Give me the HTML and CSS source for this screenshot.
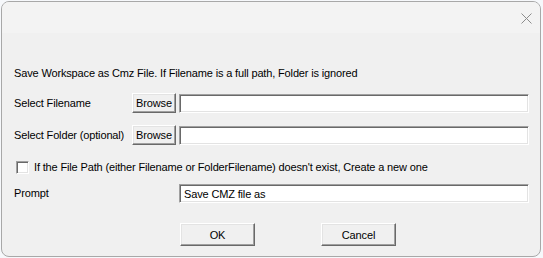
FILE: index.html
```html
<!DOCTYPE html>
<html lang="en">
<head>
  <meta charset="UTF-8">
  <title>Save Workspace</title>
  <link rel="stylesheet" href="styles.css">
</head>
<body>
  <div class="dialog">
    <div class="titlebar">
      <svg class="close" width="11" height="11" viewBox="0 0 11 11">
        <path d="M0.5 0.5 L10.5 10.5 M10.5 0.5 L0.5 10.5" stroke="#8c8c8c" stroke-width="1" fill="none"/>
      </svg>
    </div>
    <div class="content">
      <p class="intro">Save Workspace as Cmz File. If Filename is a full path, Folder is ignored</p>
      <div class="row row-file">
        <span class="label">Select Filename</span>
        <button class="browse" type="button">Browse</button>
        <input class="field" type="text">
      </div>
      <div class="row row-folder">
        <span class="label">Select Folder (optional)</span>
        <button class="browse" type="button">Browse</button>
        <input class="field" type="text">
      </div>
      <label class="check-row">
        <span class="checkbox"></span>
        <span>If the File Path (either Filename or FolderFilename) doesn't exist, Create a new one</span>
      </label>
      <div class="row row-prompt">
        <span class="label label-wide">Prompt</span>
        <input class="field" type="text" value="Save CMZ file as">
      </div>
      <div class="actions">
        <button class="btn" type="button">OK</button>
        <button class="btn" type="button">Cancel</button>
      </div>
    </div>
  </div>
</body>
</html>
```

FILE: styles.css
```css
body {
  margin: 0;
  padding: 1px 0 0 1px;
  background: #f6f8fb;
  font-family: 'Liberation Sans', Arial, sans-serif;
  font-size: 11px;
  letter-spacing: -0.15px;
  color: #000;
  overflow: hidden;
}
.dialog {
  width: 540px;
  height: 256px;
  box-sizing: border-box;
  border: 1px solid #a8a8a8;
  border-radius: 8px;
  background: #f0f0f0;
  overflow: hidden;
}
.titlebar {
  height: 31px;
  background: #f3f3f3;
  display: flex;
  align-items: center;
  justify-content: flex-end;
  padding-right: 8px;
}
.close {
  display: block;
  margin-top: 1px;
}
.content {
  padding: 0 11px 0 12px;
  display: flex;
  flex-direction: column;
}
.intro {
  margin: 32px 0 0 0;
  height: 16px;
  line-height: 16px;
}
.row {
  display: flex;
  align-items: flex-start;
  height: 21px;
}
.row-file { margin-top: 12px; }
.row-folder { margin-top: 11px; }
.row-prompt {
  margin-top: 9px;
  height: 19px;
}
.label {
  width: 118px;
  line-height: 21px;
}
.label-wide {
  width: 165px;
  line-height: 19px;
}
.browse, .btn {
  font-family: inherit;
  font-size: 11px;
  letter-spacing: inherit;
  color: #000;
  background: #f0f0f0;
  border: 1px solid;
  border-color: #fff #696969 #696969 #fff;
  box-shadow: inset -1px -1px 0 #a0a0a0, inset 1px 1px 0 #e3e3e3;
  padding: 0;
  margin: 0;
}
.browse {
  width: 44px;
  height: 20px;
  margin-right: 3px;
}
.field {
  flex: 1;
  height: 19px;
  box-sizing: border-box;
  margin: 1px 0 0 0;
  padding: 0 4px;
  font-family: inherit;
  font-size: 11px;
  letter-spacing: inherit;
  color: #000;
  background: #fff;
  border: 1px solid;
  border-color: #a0a0a0 #fff #fff #a0a0a0;
  box-shadow: inset 1px 1px 0 #696969, inset -1px -1px 0 #e3e3e3;
  outline: none;
}
.row-prompt .field { margin-top: 0; }
.check-row {
  margin-top: 13px;
  height: 16px;
  display: flex;
  align-items: center;
  gap: 5px;
  padding-left: 2px;
}
.checkbox {
  width: 13px;
  height: 13px;
  box-sizing: border-box;
  background: #fff;
  border: 1px solid;
  border-color: #a0a0a0 #fff #fff #a0a0a0;
  box-shadow: inset 1px 1px 0 #696969, inset -1px -1px 0 #e3e3e3;
}
.actions {
  margin-top: 20px;
  display: flex;
  gap: 66px;
  padding-left: 166px;
}
.btn {
  width: 75px;
  height: 23px;
}
```
